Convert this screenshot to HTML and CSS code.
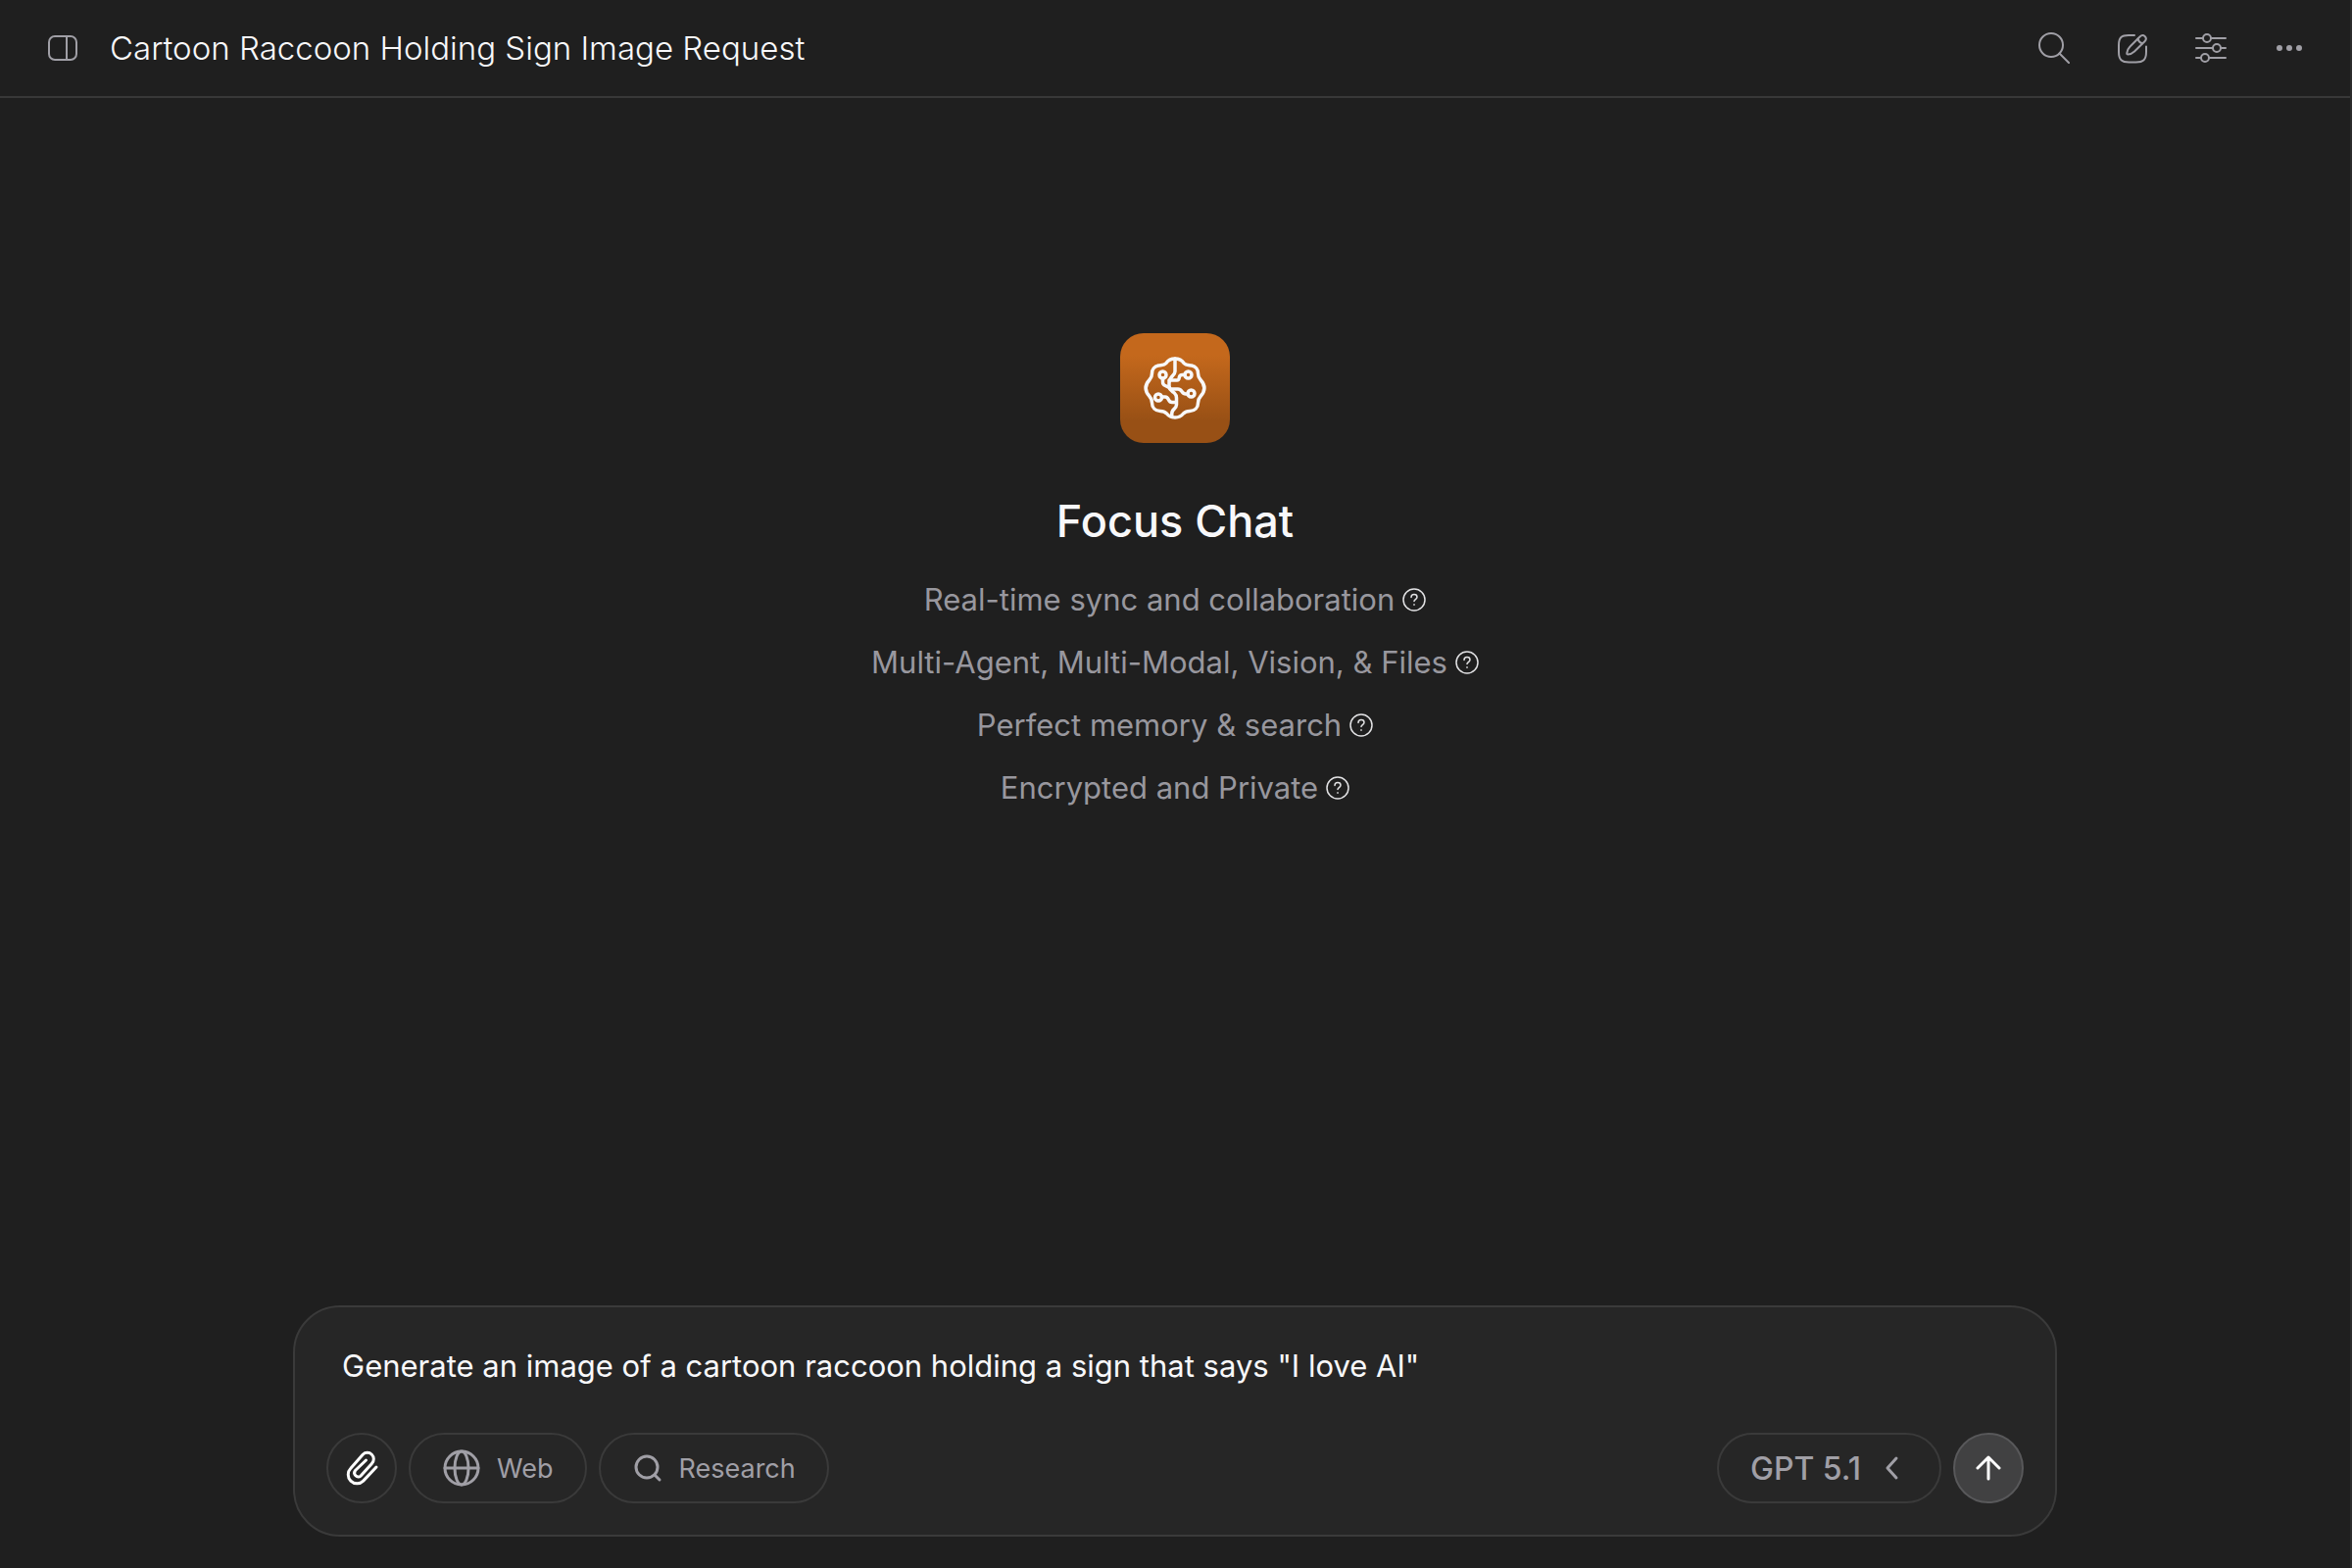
FILE: index.html
```html
<!DOCTYPE html>
<html lang="en">
<head>
<meta charset="utf-8">
<meta name="viewport" content="width=device-width, initial-scale=1">
<title>Focus Chat</title>
<link rel="stylesheet" href="styles.css">
</head>
<body>
<div class="app">
  <header class="topbar">
    <button class="icon-button" type="button" aria-label="Toggle sidebar">
      <svg class="icon" viewBox="0 0 32 32"><rect x="2" y="4" width="28" height="24" rx="6"/><path d="M20 4v24"/></svg>
    </button>
    <h1 class="topbar-title">Cartoon Raccoon Holding Sign Image Request</h1>
    <nav class="topbar-actions" aria-label="Chat actions">
      <button class="icon-button" type="button" aria-label="Search">
        <svg class="icon" viewBox="0 0 32 32"><circle cx="13" cy="13" r="12"/><path d="M21.5 21.5L31 31"/></svg>
      </button>
      <button class="icon-button" type="button" aria-label="New chat">
        <svg class="icon" viewBox="0 0 32 32"><path d="M18 3H12C5 3 2 5 2 13v7c0 8 3 10.5 10.5 10.5h7c7.5 0 10.5-2.5 10.5-10.5v-5.5"/><path d="M23.5 4.500c2-2 4-1.5 5.300-.3 1.200 1.300 1.500 3.200-.3 5L18 19.500c-2 1.800-4.500 3-6.600 3-1 0-1.200-.5-1.100-1.300.3-2.500 1.400-5 3.200-6.700z"/><path d="M21.5 6.500c.5 2.500 2 4 4.500 4.700"/></svg>
      </button>
      <button class="icon-button" type="button" aria-label="Settings">
        <svg class="icon" viewBox="0 0 32 32"><path d="M1 6h7M16 6h15M1 16h17M26 16h5M1 26h5M14 26h17"/><circle cx="12" cy="6" r="4"/><circle cx="22" cy="16" r="4"/><circle cx="10" cy="26" r="4"/></svg>
      </button>
      <button class="icon-button" type="button" aria-label="More options">
        <svg class="icon icon-filled" viewBox="0 0 32 32"><circle cx="6" cy="16" r="3"/><circle cx="16" cy="16" r="3"/><circle cx="26" cy="16" r="3"/></svg>
      </button>
    </nav>
  </header>

  <main class="chat">
    <section class="welcome">
      <div class="logo">
        <svg class="logo-mark" viewBox="0 0 64 64"><path d="M32 2c4 0 7 1.500 9 4.500C43 9 46 8.500 49 9c4 .7 6.500 4 6.500 8 0 3 .2 4 2.500 6.500 5 5.500 5 11.500 0 17-2.300 2.500-2.500 3.500-2.500 6.500 0 5-3.500 8.500-8.500 8.500-3 0-4 0-6.500 2.500-2 2.500-5 4-8.500 4s-6.500-1.500-8.500-4C21 55.500 20 55.500 17 55.500c-5 0-8.500-3.500-8.500-8.500 0-3-.2-4-2.500-6.500-5-5.500-5-11.500 0-17 2.300-2.500 2.500-3.500 2.500-6.500 0-4 2.500-7.300 6.500-8 3-.5 6 0 8-2.500C25 3.500 28 2 32 2z"/><path d="M32 2v13c0 2-1 3-2.500 4.500C27 22 26 24 26 27v3c0 3 2 4.500 4 6l1.500 1.200C33 38.500 33.500 40 33.500 42v7c0 2-1 3-2.500 4.500-2 1.500-3 3-2 8"/><path d="M26 24h8c2 0 2-1 2.300-3 .4-2 1.200-2.500 3.200-2.500H42"/><circle cx="45.500" cy="18.500" r="3.500"/><circle cx="19.500" cy="18.500" r="3.500"/><path d="M19.500 22v4c0 2 .5 2.700 2.500 3.500l4 2"/><path d="M27 33h8c2 0 3 1 4 2.500s2 2.500 4 2.500h2"/><circle cx="48.500" cy="37.500" r="3.500"/><circle cx="15" cy="41.500" r="3.500"/><path d="M18.500 41H22c2 0 2.700 1.200 3.500 3 .8 1.700 1.500 2.500 3.500 2.500h4"/></svg>
      </div>
      <h2 class="welcome-title">Focus Chat</h2>
      <ul class="features">
        <li class="feature">Real-time sync and collaboration
          <button class="help" type="button" aria-label="About sync"><svg class="help-icon" viewBox="0 0 24 24"><circle cx="12" cy="12" r="11"/><path d="M9 9.500C9 7.500 10.300 6.500 12 6.500s3 1.100 3 2.700c0 2.300-3 2.300-3 4.300M12 16.800v.4"/></svg></button></li>
        <li class="feature">Multi-Agent, Multi-Modal, Vision, &amp; Files
          <button class="help" type="button" aria-label="About agents and files"><svg class="help-icon" viewBox="0 0 24 24"><circle cx="12" cy="12" r="11"/><path d="M9 9.500C9 7.500 10.300 6.500 12 6.500s3 1.100 3 2.700c0 2.300-3 2.300-3 4.300M12 16.800v.4"/></svg></button></li>
        <li class="feature">Perfect memory &amp; search
          <button class="help" type="button" aria-label="About memory"><svg class="help-icon" viewBox="0 0 24 24"><circle cx="12" cy="12" r="11"/><path d="M9 9.500C9 7.500 10.300 6.500 12 6.500s3 1.100 3 2.700c0 2.300-3 2.300-3 4.300M12 16.800v.4"/></svg></button></li>
        <li class="feature">Encrypted and Private
          <button class="help" type="button" aria-label="About privacy"><svg class="help-icon" viewBox="0 0 24 24"><circle cx="12" cy="12" r="11"/><path d="M9 9.500C9 7.500 10.300 6.500 12 6.500s3 1.100 3 2.700c0 2.300-3 2.300-3 4.300M12 16.800v.4"/></svg></button></li>
      </ul>
    </section>

    <form class="composer">
      <textarea class="prompt" rows="1" aria-label="Message">Generate an image of a cartoon raccoon holding a sign that says "I love AI"</textarea>
      <div class="tools">
        <button class="tool tool-round" type="button" aria-label="Attach files">
          <svg class="tool-icon-large" viewBox="0 0 40 40"><path d="M35 19L21.700 33.100A9 9 0 0 1 8.900 20.300L21.200 6.200A6.500 6.500 0 0 1 30.400 15.400L19.100 28.100A4 4 0 0 1 13.500 22.500L24.500 12"/></svg>
        </button>
        <button class="tool" type="button">
          <svg class="tool-icon-large" viewBox="0 0 40 40"><circle cx="20" cy="20" r="17"/><ellipse cx="20" cy="20" rx="7" ry="17"/><path d="M3 20h34"/></svg>
          Web
        </button>
        <button class="tool" type="button">
          <svg class="tool-icon" viewBox="0 0 32 32"><circle cx="15" cy="15" r="11"/><path d="M23 23l5 5"/></svg>
          Research
        </button>
        <button class="tool model" type="button">
          GPT 5.1
          <svg class="tool-icon" viewBox="0 0 32 32"><path d="M20 6l-9 10 9 10"/></svg>
        </button>
        <button class="tool tool-round send" type="submit" aria-label="Send">
          <svg class="tool-icon" viewBox="0 0 32 32"><path d="M16 27V5M5 16L16 5l11 11"/></svg>
        </button>
      </div>
    </form>
  </main>
</div>
</body>
</html>
```
FILE: styles.css
```css
* {
  box-sizing: border-box;
}

body {
  margin: 0;
  background: #1f1f1f;
  color: #f8f8fa;
  font-family: Inter, "Liberation Sans", sans-serif;
  font-size: 31px;
}

button,
textarea {
  font: inherit;
  color: inherit;
}

button {
  display: flex;
  align-items: center;
  justify-content: center;
  padding: 0;
  border: 0;
  background: none;
  cursor: pointer;
}

svg {
  display: block;
  flex: none;
  fill: none;
  stroke: currentColor;
  stroke-width: 2;
  stroke-linecap: round;
  stroke-linejoin: round;
}

.app {
  display: flex;
  flex-direction: column;
  min-height: 100vh;
  border-right: 2px solid #2b2b2b;
}

.topbar {
  display: flex;
  align-items: center;
  min-height: 100px;
  padding: 0 22px 0 24px;
  border-bottom: 2px solid #383838;
}

.icon-button {
  width: 80px;
  height: 80px;
  color: #a09fa6;
}

.icon {
  width: 32px;
  height: 32px;
}

.icon-filled {
  fill: currentColor;
  stroke: none;
}

.topbar-title {
  flex: 1;
  margin: 0 0 0 8px;
  font-size: 33px;
  font-weight: 300;
  line-height: 40px;
}

.topbar-actions {
  display: flex;
}

.chat {
  flex: 1;
  display: flex;
  flex-direction: column;
  justify-content: space-between;
  align-items: center;
  padding: 240px 32px 32px;
}

.welcome {
  display: flex;
  flex-direction: column;
  align-items: center;
}

.logo {
  display: grid;
  place-items: center;
  width: 112px;
  height: 112px;
  border-radius: 24px;
  background: linear-gradient(#c4681c 20%, #985015 80%);
}

.logo-mark {
  width: 64px;
  height: 64px;
  stroke-width: 3.5;
}

.welcome-title {
  margin: 50px 0 30px;
  font-size: 45px;
  font-weight: 500;
  line-height: 60px;
}

.features {
  display: flex;
  flex-direction: column;
  gap: 24px;
  margin: 0;
  padding: 0;
  list-style: none;
  color: #98979e;
}

.feature {
  display: flex;
  align-items: center;
  justify-content: center;
  gap: 8px;
  line-height: 40px;
}

.help {
  color: #e2e2e4;
}

.help-icon {
  width: 24px;
  height: 24px;
  stroke-width: 1.5;
}

.composer {
  display: flex;
  flex-direction: column;
  gap: 32px;
  width: 100%;
  max-width: 1800px;
  padding: 32px;
  border: 2px solid #3a3a3a;
  border-radius: 48px;
  background: #262626;
}

.prompt {
  display: block;
  height: 64px;
  padding: 8px 16px;
  border: 0;
  outline: 0;
  resize: none;
  overflow: hidden;
  background: none;
  line-height: 40px;
}

.tools {
  display: flex;
  gap: 12px;
}

.tool {
  gap: 16px;
  height: 72px;
  padding: 0 32px;
  border: 2px solid #3a3a3a;
  border-radius: 36px;
  color: #a09fa6;
  font-size: 27px;
}

.tool-round {
  width: 72px;
  padding: 0;
  color: #ffffff;
}

.tool-icon {
  width: 32px;
  height: 32px;
  stroke-width: 3;
}

.tool-icon-large {
  width: 40px;
  height: 40px;
  stroke-width: 3;
}

.model {
  margin-left: auto;
  font-size: 32px;
  font-weight: 500;
}

.send {
  border-color: #58585a;
  background: #414142;
}
```
